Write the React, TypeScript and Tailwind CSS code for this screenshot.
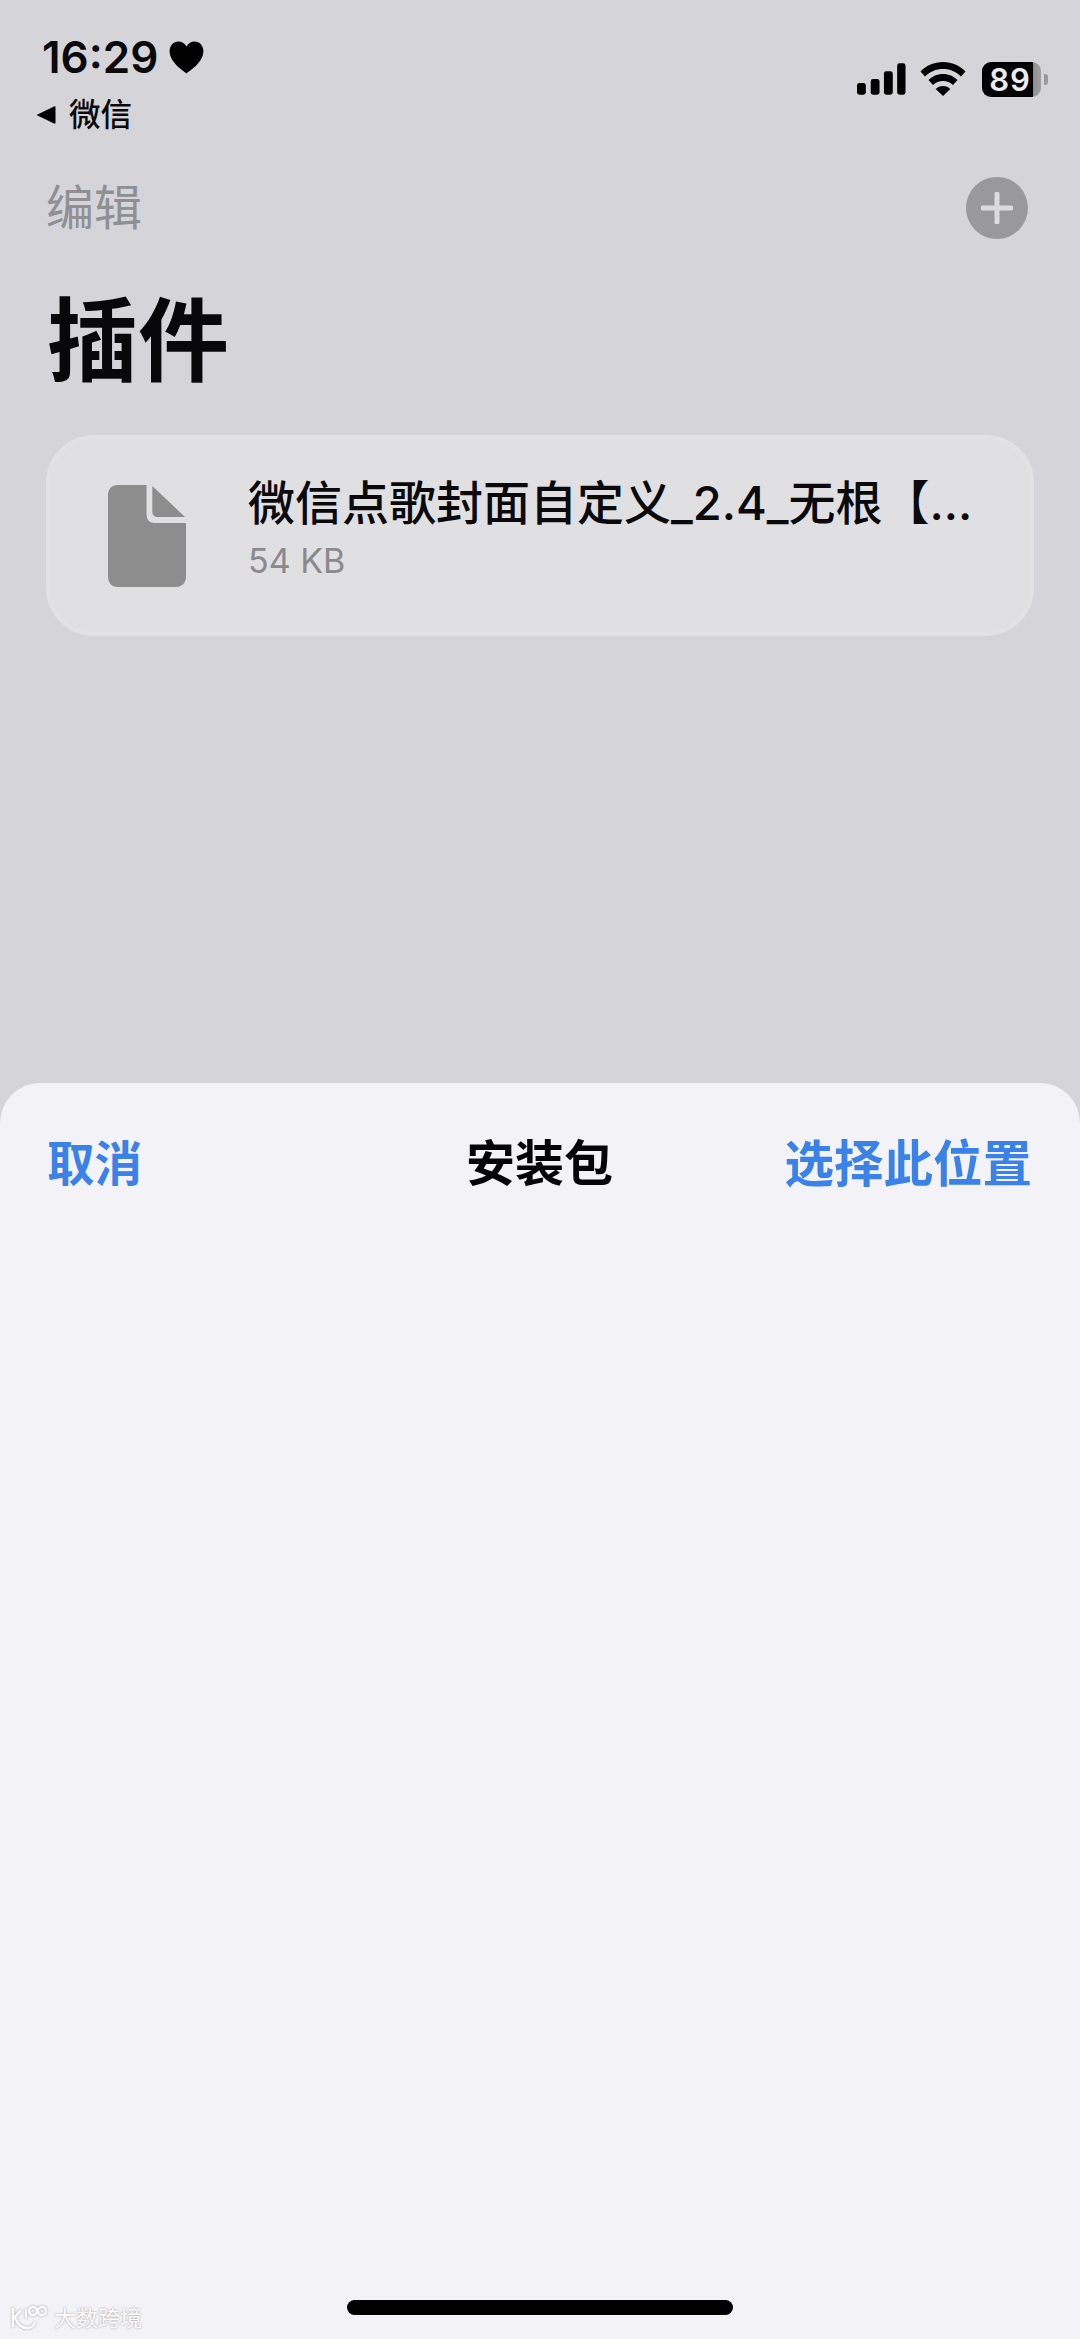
export default function App() {
  return (
    <div className="relative flex h-[2339px] w-[1080px] flex-col overflow-hidden bg-[#d4d4d9] font-['Inter','Noto_Sans_CJK_SC',sans-serif] text-black">
      <div className="flex h-[162px] shrink-0 items-start justify-between pl-[36px] pr-[32px] pt-[30px]">
        <div className="flex flex-col">
          <div className="flex h-[54px] items-center gap-[11px] pl-[6px]">
            <span className="text-[44px] font-semibold leading-[54px] text-[#0a0a0c]">16:29</span>
            <svg width="35" height="33" viewBox="0 0 35 33" aria-hidden="true">
              <path d="M17.5 32.500C15 30 1 22 .6 10.500.4 4.500 4.500.5 9.500.5c3.500 0 6.500 2 8 5 1.500-3 4.500-5 8-5 5 0 9.100 4 8.900 10C34 22 20 30 17.500 32.500Z" fill="#000" />
            </svg>
          </div>
          <div className="mt-[11px] flex h-[40px] items-center gap-[13px]">
            <svg width="20" height="20" viewBox="0 0 20 20" aria-hidden="true">
              <path d="M.5 10 18 1.500c1-.4 1.500 0 1.500 1v15c0 1-.5 1.400-1.500 1Z" fill="#000" />
            </svg>
            <span className="text-[31.500px] font-medium leading-[40px] text-[#0a0a0c]">微信</span>
          </div>
        </div>
        <div className="mt-[30px] flex h-[38px] items-center">
          <svg className="ml-[3px]" width="49" height="33" viewBox="0 0 50 33" aria-hidden="true">
            <rect x="0" y="20" width="9" height="12" rx="2.500" fill="#000" />
            <rect x="14" y="16" width="9" height="16" rx="2.500" fill="#000" />
            <rect x="27.500" y="8" width="9" height="24" rx="2.500" fill="#000" />
            <rect x="41" y="0" width="8.500" height="32" rx="2.500" fill="#000" />
          </svg>
          <svg className="ml-[14px]" width="46" height="34" viewBox="0 0 46 34" aria-hidden="true">
            <path d="M23 0C14 0 6.500 3.500 .5 9.500l4.500 5C10 9.500 16 7 23 7s13 2.500 18 7.500l4.500-5C39.500 3.500 32 0 23 0Z" fill="#000" />
            <path d="M23 12c-6 0-10.500 2.200-14.500 6l4.500 5c2.700-2.500 6-4 10-4s7.300 1.500 10 4l4.500-5c-4-3.800-8.500-6-14.500-6Z" fill="#000" />
            <path d="M23 24c-3 0-5.300 1-7.300 3L23 34l7.300-7c-2-2-4.300-3-7.300-3Z" fill="#000" />
          </svg>
          <div className="ml-[16px] flex h-[35px] w-[59px] items-center justify-center overflow-hidden rounded-[9px] bg-[linear-gradient(90deg,#000_0,#000_86%,#8e8e90_86%,#a0a0a2_100%)]">
            <span className="pr-[3px] text-[31px] font-semibold leading-[35px] tracking-[1px] text-[#ececec]">89</span>
          </div>
          <div className="ml-[3px] h-[11px] w-[4px] rounded-r-[3px] bg-[#9a9a9e]" />
        </div>
      </div>

      <div className="flex h-[92px] shrink-0 items-center justify-between pl-[46px] pr-[52px]">
        <span className="text-[48px] leading-[60px] text-[#8f8f94]">编辑</span>
        <div className="flex h-[62px] w-[62px] items-center justify-center rounded-full bg-[#98989d]">
          <svg width="32" height="32" viewBox="0 0 32 32" aria-hidden="true">
            <path d="M16 2v28M2 16h28" stroke="#dcdce0" strokeWidth="5" strokeLinecap="round" />
          </svg>
        </div>
      </div>

      <h1 className="mt-[34px] h-[106px] shrink-0 pl-[47px] text-[91px] font-bold leading-[106px] text-[#08080b]">插件</h1>

      <div className="mx-[46px] mt-[41px] flex h-[201px] shrink-0 items-center rounded-[48px] border-[4px] border-[#e2e2e4] bg-[#e0e0e2] pl-[54px] pr-[36px]">
        <svg className="ml-[4px] shrink-0" width="78" height="104" viewBox="0 0 81 104" preserveAspectRatio="none" aria-hidden="true">
          <path d="M10 1h30v29c0 6 3 9 9 9h32v53c0 7-4 11-11 11H10c-6 0-10-4-10-11V11C0 5 4 1 10 1Z" fill="#8d8d8e" />
          <path d="M46 2 80 33H52c-4 0-6-2-6-6Z" fill="#8d8d8e" />
        </svg>
        <div className="ml-[62px] flex min-w-0 flex-1 -translate-y-[8px] flex-col">
          <div className="whitespace-nowrap text-[47px] font-medium leading-[56px] text-[#0a0a0c]">微信点歌封面自定义_2.4_无根【...</div>
          <div className="mt-[10px] text-[34px] leading-[40px] text-[#8a8a8e]">54 KB</div>
        </div>
      </div>

      <div className="mt-[447px] flex min-h-0 flex-1 flex-col rounded-t-[40px] bg-[#f2f2f7]">
        <div className="grid h-[109px] shrink-0 grid-cols-[1fr_auto_1fr] items-end pl-[47px] pr-[48px]">
          <span className="text-[47.500px] font-semibold leading-[56px] text-[#3b82e8]">取消</span>
          <span className="text-[49px] font-semibold leading-[56px] text-[#050507]">安装包</span>
          <span className="text-right text-[49.500px] font-semibold leading-[56px] text-[#3b82e8]">选择此位置</span>
        </div>
        <div className="mt-auto mb-[24px] flex justify-center">
          <div className="h-[15px] w-[386px] rounded-full bg-black" />
        </div>
      </div>

      <div className="absolute left-[10px] top-[2304px] flex items-center gap-[4px]">
        <svg width="40" height="28" viewBox="0 0 40 28" aria-hidden="true">
          <g fill="none" stroke="#fff" strokeWidth="2.500" style={{ filter: "drop-shadow(0 0 1px #9a9a9e)" }}>
            <path d="M3 4v19M11 6 5 13c2 6 6 11 12 11 4 0 7-2 8-6" />
            <path d="M16 5v9" />
            <circle cx="23" cy="7" r="4" />
            <circle cx="32" cy="7" r="4" />
          </g>
        </svg>
        <span className="text-[22px] leading-[28px] text-white [text-shadow:0_0_2px_#8e8e93]">大数跨境</span>
      </div>
    </div>
  );
}
